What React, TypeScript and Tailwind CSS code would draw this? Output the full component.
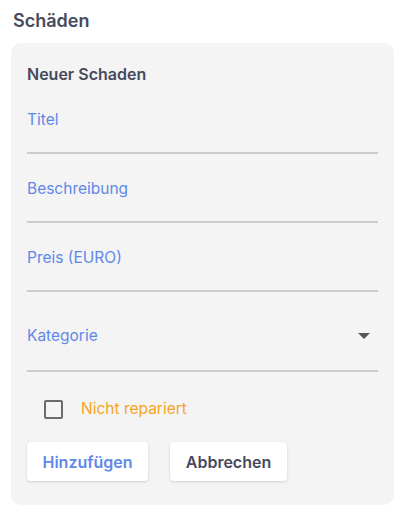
const fields = ["Titel", "Beschreibung", "Preis (EURO)"]

function Field({ label }: { label: string }) {
  return (
    <div className="pt-[25px]">
      <div className="text-[15.5px] leading-[20px] text-[#5f88e8]">{label}</div>
      <div className="mt-[22px] h-[2px] bg-[#cbcbcb]" />
    </div>
  )
}

export default function App() {
  return (
    <div className="min-h-[511px] bg-white font-['Inter',sans-serif] text-[#474a5c]">
      <h1 className="px-[13px] pt-[9px] text-[18px] leading-[24px] font-semibold">Schäden</h1>
      <div className="ml-[11px] mt-[10px] w-[383px] rounded-[10px] bg-[#f4f4f4] px-4 pt-[21px] pb-[24px]">
        <h2 className="text-[16px] leading-[20px] font-semibold">Neuer Schaden</h2>
        <div className="pt-[1px]">
          {fields.map((f) => (
            <Field key={f} label={f} />
          ))}
        </div>
        <div className="pt-[34px]">
          <div className="flex items-center justify-between">
            <span className="text-[15.5px] leading-[20px] text-[#5f88e8]">Kategorie</span>
            <svg width="12" height="6" viewBox="0 0 12 6" className="mr-2">
              <path d="M0 0h12L6 6z" fill="#555" />
            </svg>
          </div>
          <div className="mt-[24px] h-[2px] bg-[#cbcbcb]" />
        </div>
        <label className="mt-[27px] flex items-center pl-[17px]">
          <span className="h-[19px] w-[19px] rounded-[2px] border-2 border-[#6b6b6b]" />
          <span className="ml-[18px] text-[15.5px] leading-[20px] text-[#f5a524]">Nicht repariert</span>
        </label>
        <div className="mt-[23px] flex gap-[22px]">
          <button className="h-[39px] w-[121px] rounded-[4px] bg-white text-[16px] font-semibold text-[#5f88e8] shadow-[0_1px_3px_rgba(0,0,0,0.15)]">
            Hinzufügen
          </button>
          <button className="h-[39px] w-[117px] rounded-[4px] bg-white text-[16px] font-semibold text-[#474a5c] shadow-[0_1px_3px_rgba(0,0,0,0.15)]">
            Abbrechen
          </button>
        </div>
      </div>
    </div>
  )
}
